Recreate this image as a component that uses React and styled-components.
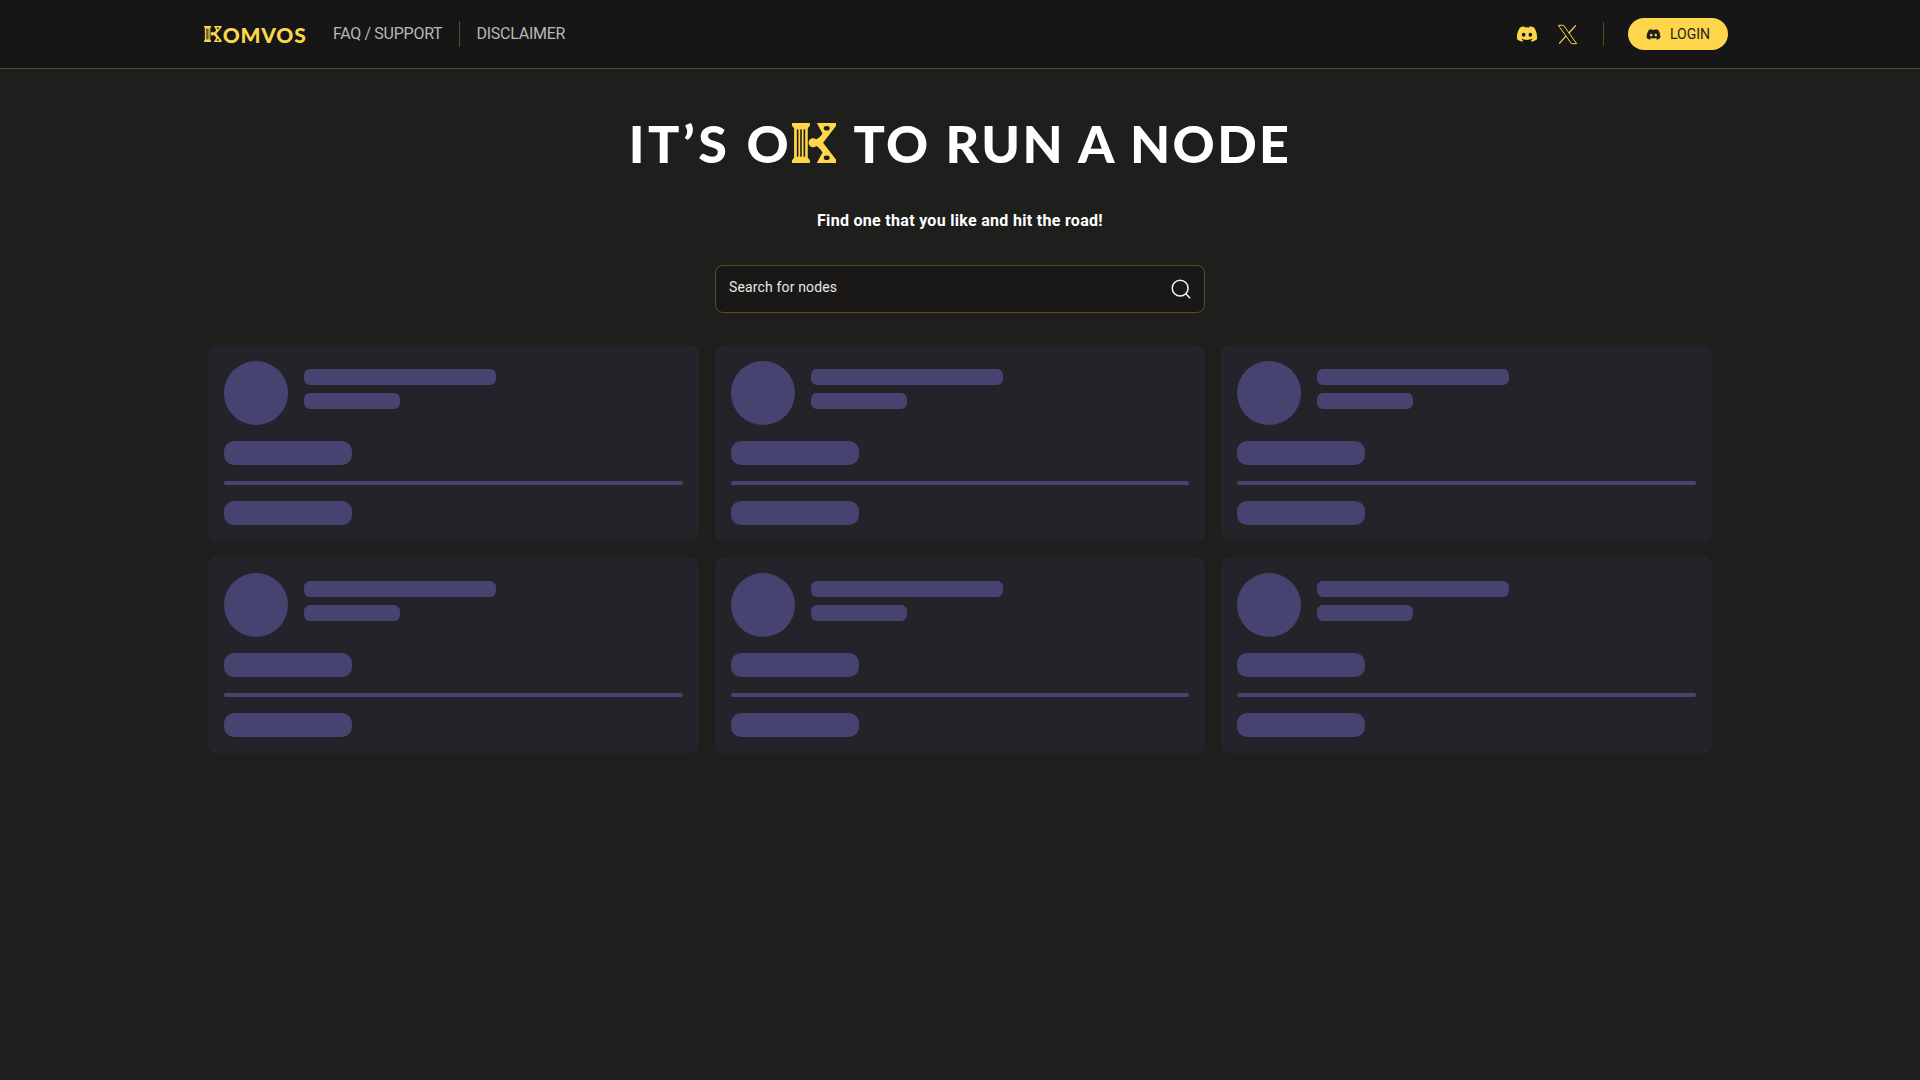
import styled, { createGlobalStyle } from "styled-components"
import { FaDiscord } from "react-icons/fa"

const GlobalStyle = createGlobalStyle`
    html, body {
        margin: 0;
        padding: 0;
        min-height: 100%;
        background-color: #1e1e1c;
    }
    * {
        box-sizing: border-box;
    }
`

function KMark({ height }) {
    return (
        <svg height={height} viewBox="0 0 42 38" fill="#fdd64b" aria-label="K">
            <path d="M0 0H17V2.5L15 5V33L17 35.5V38H0V35.5L2 33V5L0 2.5Z" />
            <g fill="#1e1e1c">
                <rect x="4.6" y="6" width="1.5" height="26" />
                <rect x="7.8" y="6" width="1.5" height="26" />
                <rect x="11" y="6" width="1.5" height="26" />
            </g>
            <path d="M23.5 0H42V2.5L29.5 18.7L42 35V38H23.5L29 28C27 24.5 25 22.5 21 21V16.5C25 15 27 13 29 10Z" />
            <circle cx="20" cy="18.7" r="4.3" />
            <g fill="#1e1e1c">
                <ellipse cx="33" cy="5" rx="2.8" ry="2.2" />
                <ellipse cx="33" cy="33" rx="2.8" ry="2.2" />
            </g>
        </svg>
    )
}

function XIcon() {
    return (
        <svg width="21" height="21" viewBox="0 0 24 24" fill="none" stroke="#fdd64b" strokeWidth="1.1">
            <path d="M1.5 1.5H7.5L22.5 22.5H16.5Z" />
            <path d="M21.5 1.5L13.4 10.6M10.4 13.6L2.5 22.5" strokeWidth="1.4" />
        </svg>
    )
}

export default function App() {
    const cards = [1, 2, 3, 4, 5, 6]

    return (
        <>
            <GlobalStyle />
            <Header>
                <HeaderInner>
                    <NavLeft>
                        <Logo>
                            <KMark height={16} />
                            <span>OMVOS</span>
                        </Logo>
                        <NavLink>FAQ / SUPPORT</NavLink>
                        <NavLink $divided>DISCLAIMER</NavLink>
                    </NavLeft>
                    <NavRight>
                        <Social><FaDiscord size={22} /></Social>
                        <Social><XIcon /></Social>
                        <Divider />
                        <LoginButton>
                            <FaDiscord size={15} />
                            LOGIN
                        </LoginButton>
                    </NavRight>
                </HeaderInner>
            </Header>
            <Main>
                <Title>
                    <TitleStart>IT’S O</TitleStart>
                    <KMark height={40} />
                    <TitleEnd>TO RUN A NODE</TitleEnd>
                </Title>
                <Subtitle>Find one that you like and hit the road!</Subtitle>
                <SearchBox>
                    <SearchInput placeholder="Search for nodes" />
                    <svg width="20" height="20" viewBox="0 0 24 24" fill="none" stroke="#f2f2f2" strokeWidth="1.8">
                        <circle cx="11" cy="11" r="9.5" />
                        <path d="M17.5 17.5L23 23" />
                    </svg>
                </SearchBox>
                <CardGrid>
                    {cards.map((card) => (
                        <Card key={card}>
                            <CardTop>
                                <Avatar />
                                <CardLines>
                                    <Bar $width="192px" $height="16px" />
                                    <Bar $width="96px" $height="16px" />
                                </CardLines>
                            </CardTop>
                            <Bar $width="128px" $height="24px" $radius="10px" />
                            <Bar $width="100%" $height="4px" $radius="2px" />
                            <Bar $width="128px" $height="24px" $radius="10px" />
                        </Card>
                    ))}
                </CardGrid>
            </Main>
        </>
    )
}

const Header = styled.header`
    height: 69px;
    background-color: #161616;
    border-bottom: 1px solid #5f4d1f;
`

const HeaderInner = styled.div`
    width: 1536px;
    height: 100%;
    margin: 0 auto;
    padding-left: 12px;
    display: flex;
    align-items: center;
    justify-content: space-between;
`

const NavLeft = styled.nav`
    display: flex;
    align-items: center;
`

const Logo = styled.div`
    display: flex;
    align-items: center;
    gap: 1px;
    width: 129px;
    color: #fdd64b;
    font-family: "Lato", sans-serif;
    font-weight: 900;
    font-size: 21px;
    letter-spacing: 0.8px;
`

const NavLink = styled.a`
    height: 26px;
    display: flex;
    align-items: center;
    padding: ${(props) => (props.$divided ? "0 0 2px 16px" : "0 17px 2px 0")};
    border-left: ${(props) => (props.$divided ? "1px solid #5f4d1f" : "none")};
    color: #b8b8b8;
    font-family: "Roboto", sans-serif;
    font-size: 16px;
    letter-spacing: -0.25px;
    word-spacing: -0.3px;
`

const NavRight = styled.div`
    display: flex;
    align-items: center;
    gap: 16px;
`

const Social = styled.a`
    display: flex;
    align-items: center;
    justify-content: center;
    width: 24px;
    height: 24px;
    color: #fdd64b;
`

const Divider = styled.div`
    width: 1px;
    height: 24px;
    margin: 0 8px;
    background-color: #5f4d1f;
`

const LoginButton = styled.button`
    width: 100px;
    height: 32px;
    display: flex;
    align-items: center;
    justify-content: center;
    gap: 9px;
    border: none;
    border-radius: 16px;
    background-color: #fdd64b;
    color: #1e1e1c;
    font-family: "Roboto", sans-serif;
    font-size: 14px;
`

const Main = styled.main`
    width: 1504px;
    margin: 0 auto;
    display: flex;
    flex-direction: column;
    align-items: center;
`

const Title = styled.h1`
    margin: 50px 0 0;
    height: 48px;
    display: flex;
    align-items: center;
    color: #ffffff;
    font-family: "Lato", sans-serif;
    font-weight: 900;
    font-size: 52px;
    white-space: pre;
`

const TitleStart = styled.span`
    letter-spacing: 3.6px;
`

const TitleEnd = styled.span`
    margin-left: 17px;
    letter-spacing: 2.4px;
`

const Subtitle = styled.p`
    margin: 44px 0 0;
    color: #ffffff;
    font-family: "Roboto", sans-serif;
    font-weight: 700;
    font-size: 16px;
    line-height: 19px;
    letter-spacing: 0.3px;
`

const SearchBox = styled.div`
    width: 490px;
    height: 48px;
    margin-top: 35px;
    padding: 0 13px;
    display: flex;
    align-items: center;
    border: 1px solid #5f4d1f;
    border-radius: 8px;
    background-color: #191817;
`

const SearchInput = styled.input`
    flex: 1;
    border: none;
    outline: none;
    background: transparent;
    padding: 0 0 5px;
    color: #e8e8e8;
    font-family: "Roboto", sans-serif;
    font-size: 14px;
    letter-spacing: 0.15px;
    &::placeholder {
        color: #e8e8e8;
        opacity: 1;
    }
`

const CardGrid = styled.div`
    width: 100%;
    margin-top: 32px;
    display: grid;
    grid-template-columns: repeat(3, 1fr);
    gap: 16px;
`

const Card = styled.div`
    padding: 16px;
    display: flex;
    flex-direction: column;
    gap: 16px;
    border-radius: 8px;
    background-color: #25232a;
`

const CardTop = styled.div`
    display: flex;
    gap: 16px;
`

const Avatar = styled.div`
    width: 64px;
    height: 64px;
    border-radius: 50%;
    background-color: #474370;
`

const CardLines = styled.div`
    padding-top: 8px;
    display: flex;
    flex-direction: column;
    gap: 8px;
`

const Bar = styled.div`
    width: ${(props) => props.$width};
    height: ${(props) => props.$height};
    border-radius: ${(props) => props.$radius || "6px"};
    background-color: #474370;
`
